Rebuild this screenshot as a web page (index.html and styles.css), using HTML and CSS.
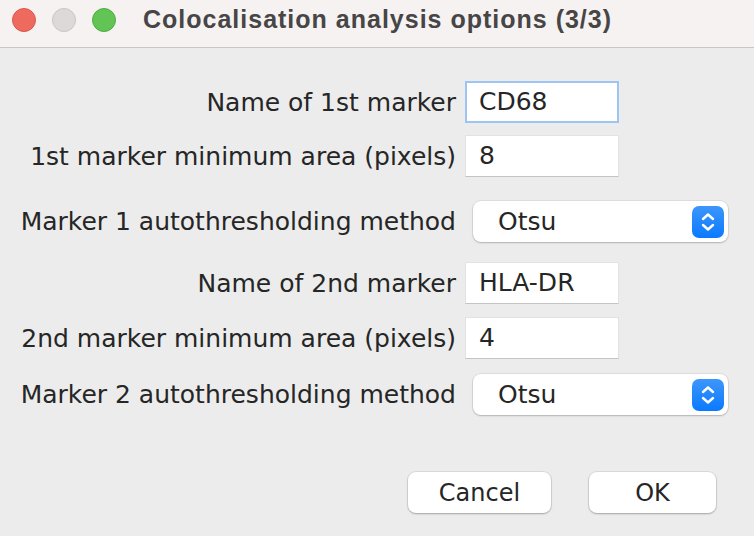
FILE: index.html
```html
<!DOCTYPE html>
<html>
<head>
<meta charset="utf-8">
<link rel="stylesheet" href="styles.css">
</head>
<body>
<div class="window">
  <header class="titlebar">
    <div class="lights">
      <span class="light red"></span>
      <span class="light gray"></span>
      <span class="light green"></span>
    </div>
    <div class="title">Colocalisation analysis options (3/3)</div>
  </header>
  <main class="content">
    <div class="form">
      <div class="row r1">
        <label class="lbl">Name of 1st marker</label>
        <div class="field focused">CD68</div>
      </div>
      <div class="row r2">
        <label class="lbl">1st marker minimum area (pixels)</label>
        <div class="field">8</div>
      </div>
      <div class="row r3">
        <label class="lbl">Marker 1 autothresholding method</label>
        <div class="select"><span class="sel-text">Otsu</span>
          <span class="stepper"><svg width="32" height="32" viewBox="0 0 32 32"><path d="M11 13 L16 8.5 L21 13" fill="none" stroke="#fff" stroke-width="2.4" stroke-linecap="round" stroke-linejoin="round"/><path d="M11 19 L16 23.5 L21 19" fill="none" stroke="#fff" stroke-width="2.4" stroke-linecap="round" stroke-linejoin="round"/></svg></span>
        </div>
      </div>
      <div class="row r4">
        <label class="lbl">Name of 2nd marker</label>
        <div class="field">HLA-DR</div>
      </div>
      <div class="row r5">
        <label class="lbl">2nd marker minimum area (pixels)</label>
        <div class="field">4</div>
      </div>
      <div class="row r6">
        <label class="lbl">Marker 2 autothresholding method</label>
        <div class="select"><span class="sel-text">Otsu</span>
          <span class="stepper"><svg width="32" height="32" viewBox="0 0 32 32"><path d="M11 13 L16 8.5 L21 13" fill="none" stroke="#fff" stroke-width="2.4" stroke-linecap="round" stroke-linejoin="round"/><path d="M11 19 L16 23.5 L21 19" fill="none" stroke="#fff" stroke-width="2.4" stroke-linecap="round" stroke-linejoin="round"/></svg></span>
        </div>
      </div>
    </div>
    <div class="buttons">
      <button class="btn cancel">Cancel</button>
      <button class="btn ok">OK</button>
    </div>
  </main>
</div>
</body>
</html>
```
FILE: styles.css
```css
html, body {
  margin: 0;
  padding: 0;
  width: 754px;
  height: 536px;
  overflow: hidden;
  background: #ececec;
  font-family: "DejaVu Sans", "Open Sans", sans-serif;
  color: #262626;
}
.window {
  display: flex;
  flex-direction: column;
  height: 536px;
}
.titlebar {
  background: #f5f2f1;
  border-bottom: 1px solid #c9c7c7;
  display: flex;
  align-items: center;
  box-sizing: border-box;
  height: 48px;
  padding-bottom: 8px;
}
.lights {
  display: flex;
  gap: 16px;
  padding-left: 12px;
}
.light {
  width: 24px;
  height: 24px;
  border-radius: 50%;
  box-sizing: border-box;
}
.light.red { background: #ee6a5f; border: 1px solid #d9574d; }
.light.gray { background: #dcd9d8; border: 1px solid #c8c5c4; }
.light.green { background: #61c454; border: 1px solid #50ae44; }
.title {
  margin-left: 27px;
  font-family: "Liberation Sans", sans-serif;
  font-weight: bold;
  font-size: 25px;
  letter-spacing: 1px;
  color: #474545;
}
.content {
  flex: 1;
  display: flex;
  flex-direction: column;
}
.form {
  display: flex;
  flex-direction: column;
}
.row {
  display: flex;
  align-items: center;
}
.lbl {
  width: 456px;
  text-align: right;
  font-size: 25px;
  white-space: nowrap;
}
.r1 { margin-top: 33px; }
.r2 { margin-top: 12px; }
.r3 { margin-top: 24px; }
.r4 { margin-top: 20px; }
.r5 { margin-top: 13px; }
.r6 { margin-top: 15px; }
.field {
  margin-left: 9px;
  width: 154px;
  height: 42px;
  box-sizing: border-box;
  background: #fff;
  border: 1px solid #e2e2e2;
  border-bottom-color: #c4c4c4;
  font-size: 25px;
  line-height: 40px;
  padding-left: 13px;
}
.field.focused {
  border: 2px solid #9cc4f5;
  padding-left: 12px;
  line-height: 38px;
}
.select {
  margin-left: 17px;
  width: 255px;
  height: 41px;
  box-sizing: border-box;
  background: #fff;
  border-radius: 8px;
  box-shadow: 0 0 0 1px rgba(0,0,0,0.06), 0 1px 2px rgba(0,0,0,0.2);
  display: flex;
  align-items: center;
  justify-content: space-between;
  padding-left: 25px;
  padding-right: 4px;
}
.sel-text { font-size: 25px; }
.stepper {
  width: 32px;
  height: 32px;
  border-radius: 7px;
  background: linear-gradient(#3d96fb, #0a7afe);
  display: flex;
}
.buttons {
  display: flex;
  justify-content: flex-end;
  gap: 38px;
  margin-top: 57px;
  padding-right: 38px;
}
.btn {
  height: 41px;
  background: #fff;
  border: none;
  border-radius: 8px;
  box-shadow: 0 0 0 1px rgba(0,0,0,0.07), 0 1px 2px rgba(0,0,0,0.25);
  font-family: "DejaVu Sans", sans-serif;
  font-size: 24px;
  color: #262626;
  padding: 0;
}
.btn.cancel { width: 143px; }
.btn.ok { width: 127px; }
```
